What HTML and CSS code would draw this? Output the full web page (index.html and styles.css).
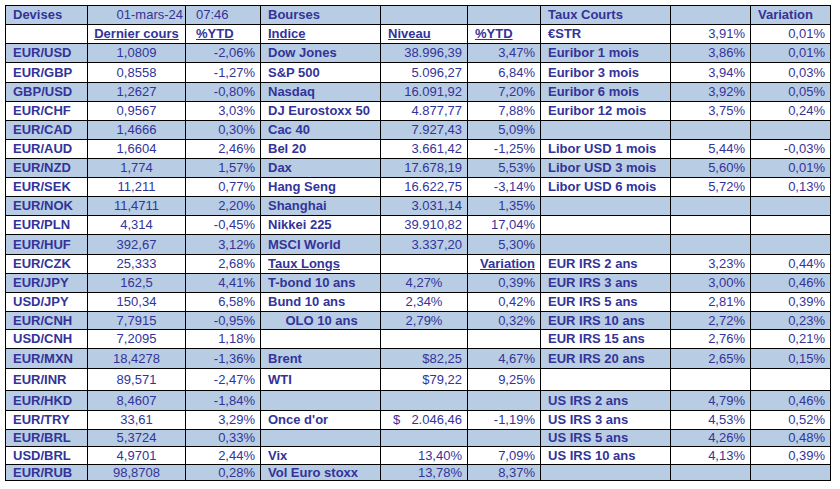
FILE: index.html
```html
<!DOCTYPE html>
<html lang="fr">
<head>
<meta charset="utf-8">
<title>Marchés</title>
<link rel="stylesheet" href="styles.css">
</head>
<body>
<table class="grid">
<colgroup>
<col class="w82"><col class="w98"><col class="w75"><col class="w120"><col class="w87"><col class="w73"><col class="w130"><col class="w80"><col class="w80">
</colgroup>
<tbody>
<tr class="b h19"><td class="l">Devises</td><td class="r tight">01-mars-24</td><td class="ind">07:46</td><td class="l">Bourses</td><td></td><td></td><td class="l">Taux Courts</td><td></td><td class="l">Variation</td></tr>
<tr class="w h19"><td></td><td class="c u">Dernier cours</td><td class="ind u">%YTD</td><td class="l u">Indice</td><td class="l u">Niveau</td><td class="l u">%YTD</td><td class="l">€STR</td><td class="r">3,91%</td><td class="r">0,01%</td></tr>
<tr class="b h19"><td class="l">EUR/USD</td><td class="c">1,0809</td><td class="r">-2,06%</td><td class="l">Dow Jones</td><td class="r">38.996,39</td><td class="r">3,47%</td><td class="l">Euribor 1 mois</td><td class="r">3,86%</td><td class="r">0,01%</td></tr>
<tr class="w h20"><td class="l">EUR/GBP</td><td class="c">0,8558</td><td class="r">-1,27%</td><td class="l">S&amp;P 500</td><td class="r">5.096,27</td><td class="r">6,84%</td><td class="l">Euribor 3 mois</td><td class="r">3,94%</td><td class="r">0,03%</td></tr>
<tr class="b h19"><td class="l">GBP/USD</td><td class="c">1,2627</td><td class="r">-0,80%</td><td class="l">Nasdaq</td><td class="r">16.091,92</td><td class="r">7,20%</td><td class="l">Euribor 6 mois</td><td class="r">3,92%</td><td class="r">0,05%</td></tr>
<tr class="w h19"><td class="l">EUR/CHF</td><td class="c">0,9567</td><td class="r">3,03%</td><td class="l">DJ Eurostoxx 50</td><td class="r">4.877,77</td><td class="r">7,88%</td><td class="l">Euribor 12 mois</td><td class="r">3,75%</td><td class="r">0,24%</td></tr>
<tr class="b h19"><td class="l">EUR/CAD</td><td class="c">1,4666</td><td class="r">0,30%</td><td class="l">Cac 40</td><td class="r">7.927,43</td><td class="r">5,09%</td><td></td><td></td><td></td></tr>
<tr class="w h19"><td class="l">EUR/AUD</td><td class="c">1,6604</td><td class="r">2,46%</td><td class="l">Bel 20</td><td class="r">3.661,42</td><td class="r">-1,25%</td><td class="l">Libor USD 1 mois</td><td class="r">5,44%</td><td class="r">-0,03%</td></tr>
<tr class="b h19"><td class="l">EUR/NZD</td><td class="c">1,774</td><td class="r">1,57%</td><td class="l">Dax</td><td class="r">17.678,19</td><td class="r">5,53%</td><td class="l">Libor USD 3 mois</td><td class="r">5,60%</td><td class="r">0,01%</td></tr>
<tr class="w h19"><td class="l">EUR/SEK</td><td class="c">11,211</td><td class="r">0,77%</td><td class="l">Hang Seng</td><td class="r">16.622,75</td><td class="r">-3,14%</td><td class="l">Libor USD 6 mois</td><td class="r">5,72%</td><td class="r">0,13%</td></tr>
<tr class="b h19"><td class="l">EUR/NOK</td><td class="c">11,4711</td><td class="r">2,20%</td><td class="l">Shanghai</td><td class="r">3.031,14</td><td class="r">1,35%</td><td></td><td></td><td></td></tr>
<tr class="w h19"><td class="l">EUR/PLN</td><td class="c">4,314</td><td class="r">-0,45%</td><td class="l">Nikkei 225</td><td class="r">39.910,82</td><td class="r">17,04%</td><td></td><td></td><td></td></tr>
<tr class="b h20"><td class="l">EUR/HUF</td><td class="c">392,67</td><td class="r">3,12%</td><td class="l">MSCI World</td><td class="r">3.337,20</td><td class="r">5,30%</td><td></td><td></td><td></td></tr>
<tr class="w h19"><td class="l">EUR/CZK</td><td class="c">25,333</td><td class="r">2,68%</td><td class="l u">Taux Longs</td><td></td><td class="r u">Variation</td><td class="l">EUR IRS 2 ans</td><td class="r">3,23%</td><td class="r">0,44%</td></tr>
<tr class="b h19"><td class="l">EUR/JPY</td><td class="c">162,5</td><td class="r">4,41%</td><td class="l">T-bond 10 ans</td><td class="c">4,27%</td><td class="r">0,39%</td><td class="l">EUR IRS 3 ans</td><td class="r">3,00%</td><td class="r">0,46%</td></tr>
<tr class="w h19"><td class="l">USD/JPY</td><td class="c">150,34</td><td class="r">6,58%</td><td class="l">Bund 10 ans</td><td class="c">2,34%</td><td class="r">0,42%</td><td class="l">EUR IRS 5 ans</td><td class="r">2,81%</td><td class="r">0,39%</td></tr>
<tr class="b h18"><td class="l">EUR/CNH</td><td class="c">7,7915</td><td class="r">-0,95%</td><td class="l cl">OLO 10 ans</td><td class="c">2,79%</td><td class="r">0,32%</td><td class="l">EUR IRS 10 ans</td><td class="r">2,72%</td><td class="r">0,23%</td></tr>
<tr class="w h19"><td class="l">USD/CNH</td><td class="c">7,2095</td><td class="r">1,18%</td><td></td><td></td><td></td><td class="l">EUR IRS 15 ans</td><td class="r">2,76%</td><td class="r">0,21%</td></tr>
<tr class="b h20"><td class="l">EUR/MXN</td><td class="c">18,4278</td><td class="r">-1,36%</td><td class="l">Brent</td><td class="r">$82,25</td><td class="r">4,67%</td><td class="l">EUR IRS 20 ans</td><td class="r">2,65%</td><td class="r">0,15%</td></tr>
<tr class="w h22"><td class="l">EUR/INR</td><td class="c">89,571</td><td class="r">-2,47%</td><td class="l">WTI</td><td class="r">$79,22</td><td class="r">9,25%</td><td></td><td></td><td></td></tr>
<tr class="b h20"><td class="l">EUR/HKD</td><td class="c">8,4607</td><td class="r">-1,84%</td><td></td><td></td><td></td><td class="l">US IRS 2 ans</td><td class="r">4,79%</td><td class="r">0,46%</td></tr>
<tr class="w h19"><td class="l">EUR/TRY</td><td class="c">33,61</td><td class="r">3,29%</td><td class="l">Once d'or</td><td class="r"><span class="cur">$</span>2.046,46</td><td class="r">-1,19%</td><td class="l">US IRS 3 ans</td><td class="r">4,53%</td><td class="r">0,52%</td></tr>
<tr class="b h17"><td class="l">EUR/BRL</td><td class="c">5,3724</td><td class="r">0,33%</td><td></td><td></td><td></td><td class="l">US IRS 5 ans</td><td class="r">4,26%</td><td class="r">0,48%</td></tr>
<tr class="w h18"><td class="l">USD/BRL</td><td class="c">4,9701</td><td class="r">2,44%</td><td class="l">Vix</td><td class="r">13,40%</td><td class="r">7,09%</td><td class="l">US IRS 10 ans</td><td class="r">4,13%</td><td class="r">0,39%</td></tr>
<tr class="b h16"><td class="l">EUR/RUB</td><td class="c">98,8708</td><td class="r">0,28%</td><td class="l">Vol Euro stoxx</td><td class="r">13,78%</td><td class="r">8,37%</td><td></td><td></td><td></td></tr>
</tbody>
</table>
</body>
</html>
```

FILE: styles.css
```css
html, body {
  margin: 0;
  padding: 0;
  background: #ffffff;
}
body {
  padding: 5px 0 0 5px;
}
.grid {
  border-collapse: collapse;
  table-layout: fixed;
  width: 826px;
  font-family: "Liberation Sans", Arial, sans-serif;
  font-size: 13px;
  color: #333399;
  border: 1px solid #000;
}
.w82 { width: 82px; }
.w98 { width: 98px; }
.w75 { width: 75px; }
.w120 { width: 120px; }
.w87 { width: 87px; }
.w73 { width: 73px; }
.w130 { width: 130px; }
.w80 { width: 80px; }
.grid td {
  border: 1px solid #000;
  padding: 0 5px 0 7px;
  line-height: 14px;
  vertical-align: middle;
  white-space: nowrap;
  overflow: hidden;
}
.b td { background: #b8cce4; }
.w td { background: #ffffff; }
.h16 { height: 16px; }
.h17 { height: 17px; }
.h18 { height: 18px; }
.h19 { height: 19px; }
.h20 { height: 20px; }
.h22 { height: 22px; }
.grid td.l { font-weight: bold; text-align: left; }
.grid td.r { text-align: right; }
.grid td.c { text-align: center; padding: 0 2px; }
.grid td.tight { padding-right: 2px; }
.grid td.ind { padding-left: 10px; text-align: left; }
.grid td.cl { text-align: center; }
.u {
  font-weight: bold;
  text-decoration: underline;
}
.cur {
  float: left;
  margin-left: 5px;
}
```
